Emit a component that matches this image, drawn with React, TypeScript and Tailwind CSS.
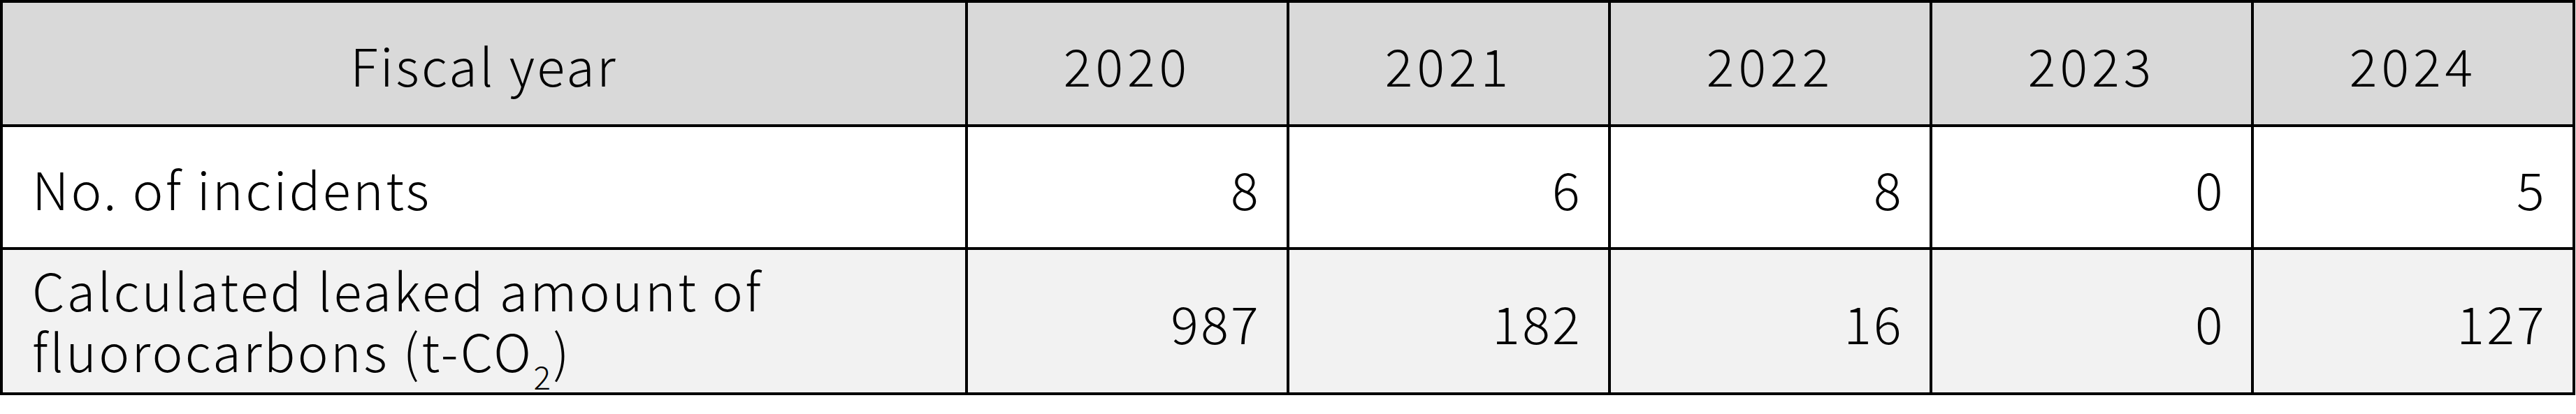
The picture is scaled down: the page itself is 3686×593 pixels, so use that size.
const years = ["2020", "2021", "2022", "2023", "2024"];
const incidents = ["8", "6", "8", "0", "5"];
const leaked = ["987", "182", "16", "0", "127"];

const font = "font-['Noto_Sans_CJK_JP','Noto_Sans',sans-serif]";

export default function App() {
  return (
    <div className={`bg-white w-[3686px] h-[593px] text-black ${font}`}>
      <div className="inline-grid grid-cols-[1377px_repeat(5,456px)] grid-rows-[174px_172px_204px] gap-[4px] p-[4px] bg-black text-[74px] leading-[87px] font-light tracking-[3.3px]">
        {/* header */}
        <div className="bg-[#d9d9d9] flex items-center justify-center">Fiscal year</div>
        {years.map((y) => (
          <div key={y} className="bg-[#d9d9d9] flex items-center justify-center tracking-[6px]">
            {y}
          </div>
        ))}

        {/* incidents */}
        <div className="bg-white flex items-center pl-[42px]">No. of incidents</div>
        {incidents.map((v, i) => (
          <div key={i} className="bg-white flex items-center justify-end pr-[37px]">
            {v}
          </div>
        ))}

        {/* leaked amount */}
        <div className="bg-[#f2f2f2] flex items-center pl-[42px]">
          <div>
            Calculated leaked amount of
            <br />
            fluorocarbons (t-CO<sub className="text-[0.62em] align-[-0.3em] leading-none">2</sub>)
          </div>
        </div>
        {leaked.map((v, i) => (
          <div key={i} className="bg-[#f2f2f2] flex items-center justify-end pr-[37px]">
            {v}
          </div>
        ))}
      </div>
    </div>
  );
}
